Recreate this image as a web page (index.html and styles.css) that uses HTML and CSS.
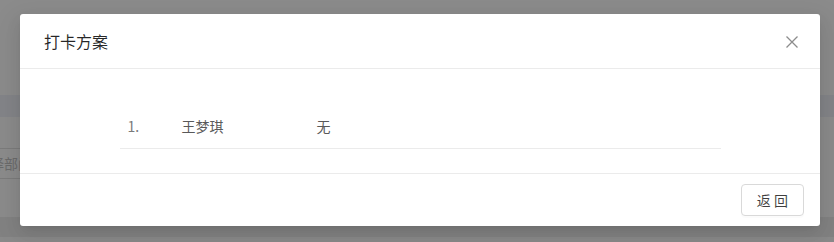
FILE: index.html
```html
<!DOCTYPE html>
<html lang="zh">
<head>
<meta charset="utf-8">
<title>打卡方案</title>
<link rel="stylesheet" href="styles.css">
</head>
<body>
<div class="page">
  <div class="band band-top"></div>
  <div class="band band-dark"></div>
  <div class="band band-mid">
    <div class="fake-input">选择部门</div>
  </div>
  <div class="band band-dark2"></div>
  <div class="band band-end"></div>
</div>

<div class="modal">
  <div class="modal-header">
    <div class="modal-title">打卡方案</div>
    <span class="modal-close" aria-label="关闭">
      <svg width="12" height="12" viewBox="0 0 12 12"><path d="M0.5 0.5L11.5 11.5M11.5 0.5L0.5 11.5" stroke="#8c8c8c" stroke-width="1.3" fill="none"/></svg>
    </span>
  </div>
  <div class="modal-body">
    <div class="list">
      <div class="row">
        <span class="col-index">1.</span>
        <span class="col-name">王梦琪</span>
        <span class="col-plan">无</span>
      </div>
    </div>
  </div>
  <div class="modal-footer">
    <button class="btn">返 回</button>
  </div>
</div>
</body>
</html>
```

FILE: styles.css
```css
html, body {
  margin: 0;
  padding: 0;
}
body {
  width: 834px;
  height: 242px;
  overflow: hidden;
  background: #8b8b8b;
  font-family: "Noto Sans CJK SC", "Noto Sans", sans-serif;
}
.page {
  display: flex;
  flex-direction: column;
}
.band-top {
  height: 95px;
  background: #8b8b8b;
}
.band-dark {
  height: 22px;
  background: #838488;
}
.band-mid {
  height: 100px;
  background: #8b8b8b;
  padding-top: 31px;
  box-sizing: border-box;
}
.fake-input {
  width: 60px;
  height: 31px;
  margin-left: -24px;
  border-top: 1px solid #7b7b7b;
  border-bottom: 1px solid #7b7b7b;
  box-sizing: border-box;
  font-size: 14px;
  line-height: 29px;
  color: #6a6a6a;
  white-space: nowrap;
}
.band-dark2 {
  height: 20px;
  background: #828282;
}
.band-end {
  height: 5px;
  background: #8a8a8a;
}

.modal {
  position: absolute;
  left: 20px;
  top: 14px;
  width: 800px;
  background: #fff;
  border-radius: 3px;
  box-shadow: 0 6px 16px rgba(0,0,0,.08), 0 3px 6px -4px rgba(0,0,0,.12), 0 9px 28px 8px rgba(0,0,0,.05);
}
.modal-header {
  display: flex;
  align-items: center;
  justify-content: space-between;
  padding: 16px 22px 16px 24px;
  border-bottom: 1px solid #ebebeb;
}
.modal-title {
  font-size: 16px;
  line-height: 22px;
  color: rgba(0,0,0,.85);
}
.modal-close {
  display: flex;
  width: 12px;
  height: 12px;
  margin-top: 2px;
}
.modal-body {
  padding: 24px;
}
.list {
  width: 601px;
  margin: 0 auto;
}
.row {
  display: flex;
  padding: 22px 0 11px 8px;
  border-bottom: 1px solid #ebebeb;
  font-size: 14px;
  line-height: 22px;
}
.col-index {
  width: 54px;
  color: #7a7a7a;
}
.col-name {
  width: 135px;
  color: #595959;
}
.col-plan {
  color: #595959;
}
.modal-footer {
  display: flex;
  justify-content: flex-end;
  padding: 10px 16px;
  border-top: 1px solid #ebebeb;
}
.btn {
  height: 32px;
  padding: 4px 15px;
  border: 1px solid #d9d9d9;
  border-radius: 4px;
  background: #fff;
  font-family: "Noto Sans CJK SC", "Noto Sans", sans-serif;
  font-size: 14px;
  line-height: 22px;
  color: rgba(0,0,0,.75);
  box-shadow: 0 2px 0 rgba(0,0,0,.015);
}
```
